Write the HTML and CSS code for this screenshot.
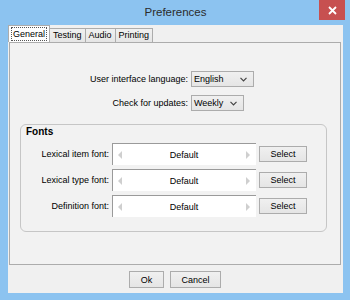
FILE: index.html
```html
<!DOCTYPE html>
<html>
<head>
<meta charset="utf-8">
<link rel="stylesheet" href="styles.css">
</head>
<body>
<div class="window">
  <div class="titlebar">
    <span class="title">Preferences</span>
    <div class="close"><svg width="9" height="9" viewBox="0 0 9 9"><path d="M1 1L8 8M8 1L1 8" stroke="#fff" stroke-width="1.8" fill="none"/></svg></div>
  </div>
  <div class="client">
    <div class="tabs">
      <div class="tab active"><span class="focus">General</span></div>
      <div class="tab">Testing</div>
      <div class="tab">Audio</div>
      <div class="tab">Printing</div>
    </div>
    <div class="panel">
      <div class="settings">
        <label class="lbl">User interface language:</label>
        <div class="combo combo-lang"><span>English</span><svg width="7" height="5" viewBox="0 0 7 5"><path d="M0.5 0.8L3.5 3.8L6.5 0.8" stroke="#444" stroke-width="1.2" fill="none"/></svg></div>
        <label class="lbl">Check for updates:</label>
        <div class="combo combo-upd"><span>Weekly</span><svg width="7" height="5" viewBox="0 0 7 5"><path d="M0.5 0.8L3.5 3.8L6.5 0.8" stroke="#444" stroke-width="1.2" fill="none"/></svg></div>
      </div>
      <div class="group">
        <div class="group-title">Fonts</div>
        <div class="font-grid">
          <label class="lbl">Lexical item font:</label>
          <div class="field"><span class="arrow left"></span><span class="val">Default</span><span class="arrow right"></span></div>
          <button class="btn">Select</button>
          <label class="lbl">Lexical type font:</label>
          <div class="field"><span class="arrow left"></span><span class="val">Default</span><span class="arrow right"></span></div>
          <button class="btn">Select</button>
          <label class="lbl">Definition font:</label>
          <div class="field"><span class="arrow left"></span><span class="val">Default</span><span class="arrow right"></span></div>
          <button class="btn">Select</button>
        </div>
      </div>
    </div>
    <div class="footer">
      <button class="btn btn-ok">Ok</button>
      <button class="btn btn-cancel">Cancel</button>
    </div>
  </div>
</div>
</body>
</html>
```
FILE: styles.css
```css
* { box-sizing: border-box; }
html, body { margin: 0; padding: 0; }
body {
  width: 350px;
  height: 300px;
  overflow: hidden;
  font-family: "Liberation Sans", Arial, sans-serif;
  font-size: 9px;
  color: #000;
}
.window {
  width: 350px;
  height: 300px;
  background: #8cc3f0;
  padding: 0 7px 7px 8px;
  display: flex;
  flex-direction: column;
}
.titlebar {
  height: 25px;
  position: relative;
  display: flex;
  justify-content: center;
  align-items: flex-start;
}
.title {
  font-size: 11.5px;
  color: #2b2b2b;
  margin-top: 6px;
  line-height: 13px;
}
.close {
  position: absolute;
  right: -2px;
  top: 0;
  width: 26px;
  height: 20px;
  background: #c75050;
  display: flex;
  align-items: center;
  justify-content: center;
}
.client {
  flex: 1;
  background: #f0f0f0;
  display: flex;
  flex-direction: column;
  padding: 0 2px 0 1px;
}
.tabs {
  display: flex;
  align-items: flex-end;
  height: 17px;
  position: relative;
  z-index: 1;
}
.tab {
  height: 14px;
  line-height: 13px;
  padding: 0 3px;
  border: 1px solid #acacac;
  border-bottom: none;
  background: linear-gradient(#f0f0f0, #e5e5e5);
  margin-left: -1px;
}
.tab.active {
  height: 17px;
  background: #ffffff;
  padding: 1px 2px 0;
  margin-left: -1px;
  margin-right: -1px;
  z-index: 2;
}
.tab.active + .tab { margin-left: 0; }
.focus {
  display: block;
  border: 1px dotted #555;
  line-height: 12px;
  padding: 0 1px;
}
.panel {
  height: 223px;
  border: 1px solid #acacac;
  background: #f2f2f2;
  padding: 28px 13px 0 10px;
}
.settings {
  display: grid;
  grid-template-columns: 178px auto;
  column-gap: 3px;
  row-gap: 8px;
  align-items: center;
  margin-left: -10px;
}
.lbl {
  text-align: right;
  white-space: nowrap;
}
.combo {
  height: 16px;
  border: 1px solid #acacac;
  background: linear-gradient(#f0f0f0, #e5e5e5);
  display: flex;
  align-items: center;
  justify-content: space-between;
  padding: 0 6px 0 2px;
}
.combo-lang { width: 63px; }
.combo-upd { width: 53px; }
.group {
  margin-top: 13px;
  height: 108px;
  border: 1px solid #c6c6c6;
  border-radius: 6px;
  padding: 1px 0 0 5px;
}
.group-title {
  font-weight: bold;
  font-size: 10px;
  line-height: 12px;
  height: 17px;
}
.font-grid {
  display: grid;
  grid-template-columns: 83px 144px 48px;
  grid-auto-rows: 22px;
  column-gap: 3px;
  row-gap: 4px;
  align-items: center;
}
.field {
  height: 22px;
  background: #fff;
  border-top: 1px solid #9a9a9a;
  border-left: 1px solid #9a9a9a;
  display: flex;
  align-items: center;
  justify-content: space-between;
  padding: 0 6px 0 5px;
}
.val { flex: 1; text-align: center; }
.arrow {
  width: 0;
  height: 0;
  border-top: 4px solid transparent;
  border-bottom: 4px solid transparent;
}
.arrow.left { border-right: 4px solid #cfcfcf; }
.arrow.right { border-left: 4px solid #cfcfcf; }
.btn {
  font-family: "Liberation Sans", Arial, sans-serif;
  font-size: 9px;
  color: #000;
  height: 16px;
  padding: 0;
  border: 1px solid #acacac;
  background: linear-gradient(#f0f0f0, #e5e5e5);
  border-radius: 0;
}
.footer {
  flex: 1;
  display: flex;
  justify-content: center;
  align-items: flex-start;
  gap: 6px;
  padding-top: 6px;
}
.btn-ok { width: 35px; height: 17px; }
.btn-cancel { width: 51px; height: 17px; }
```
